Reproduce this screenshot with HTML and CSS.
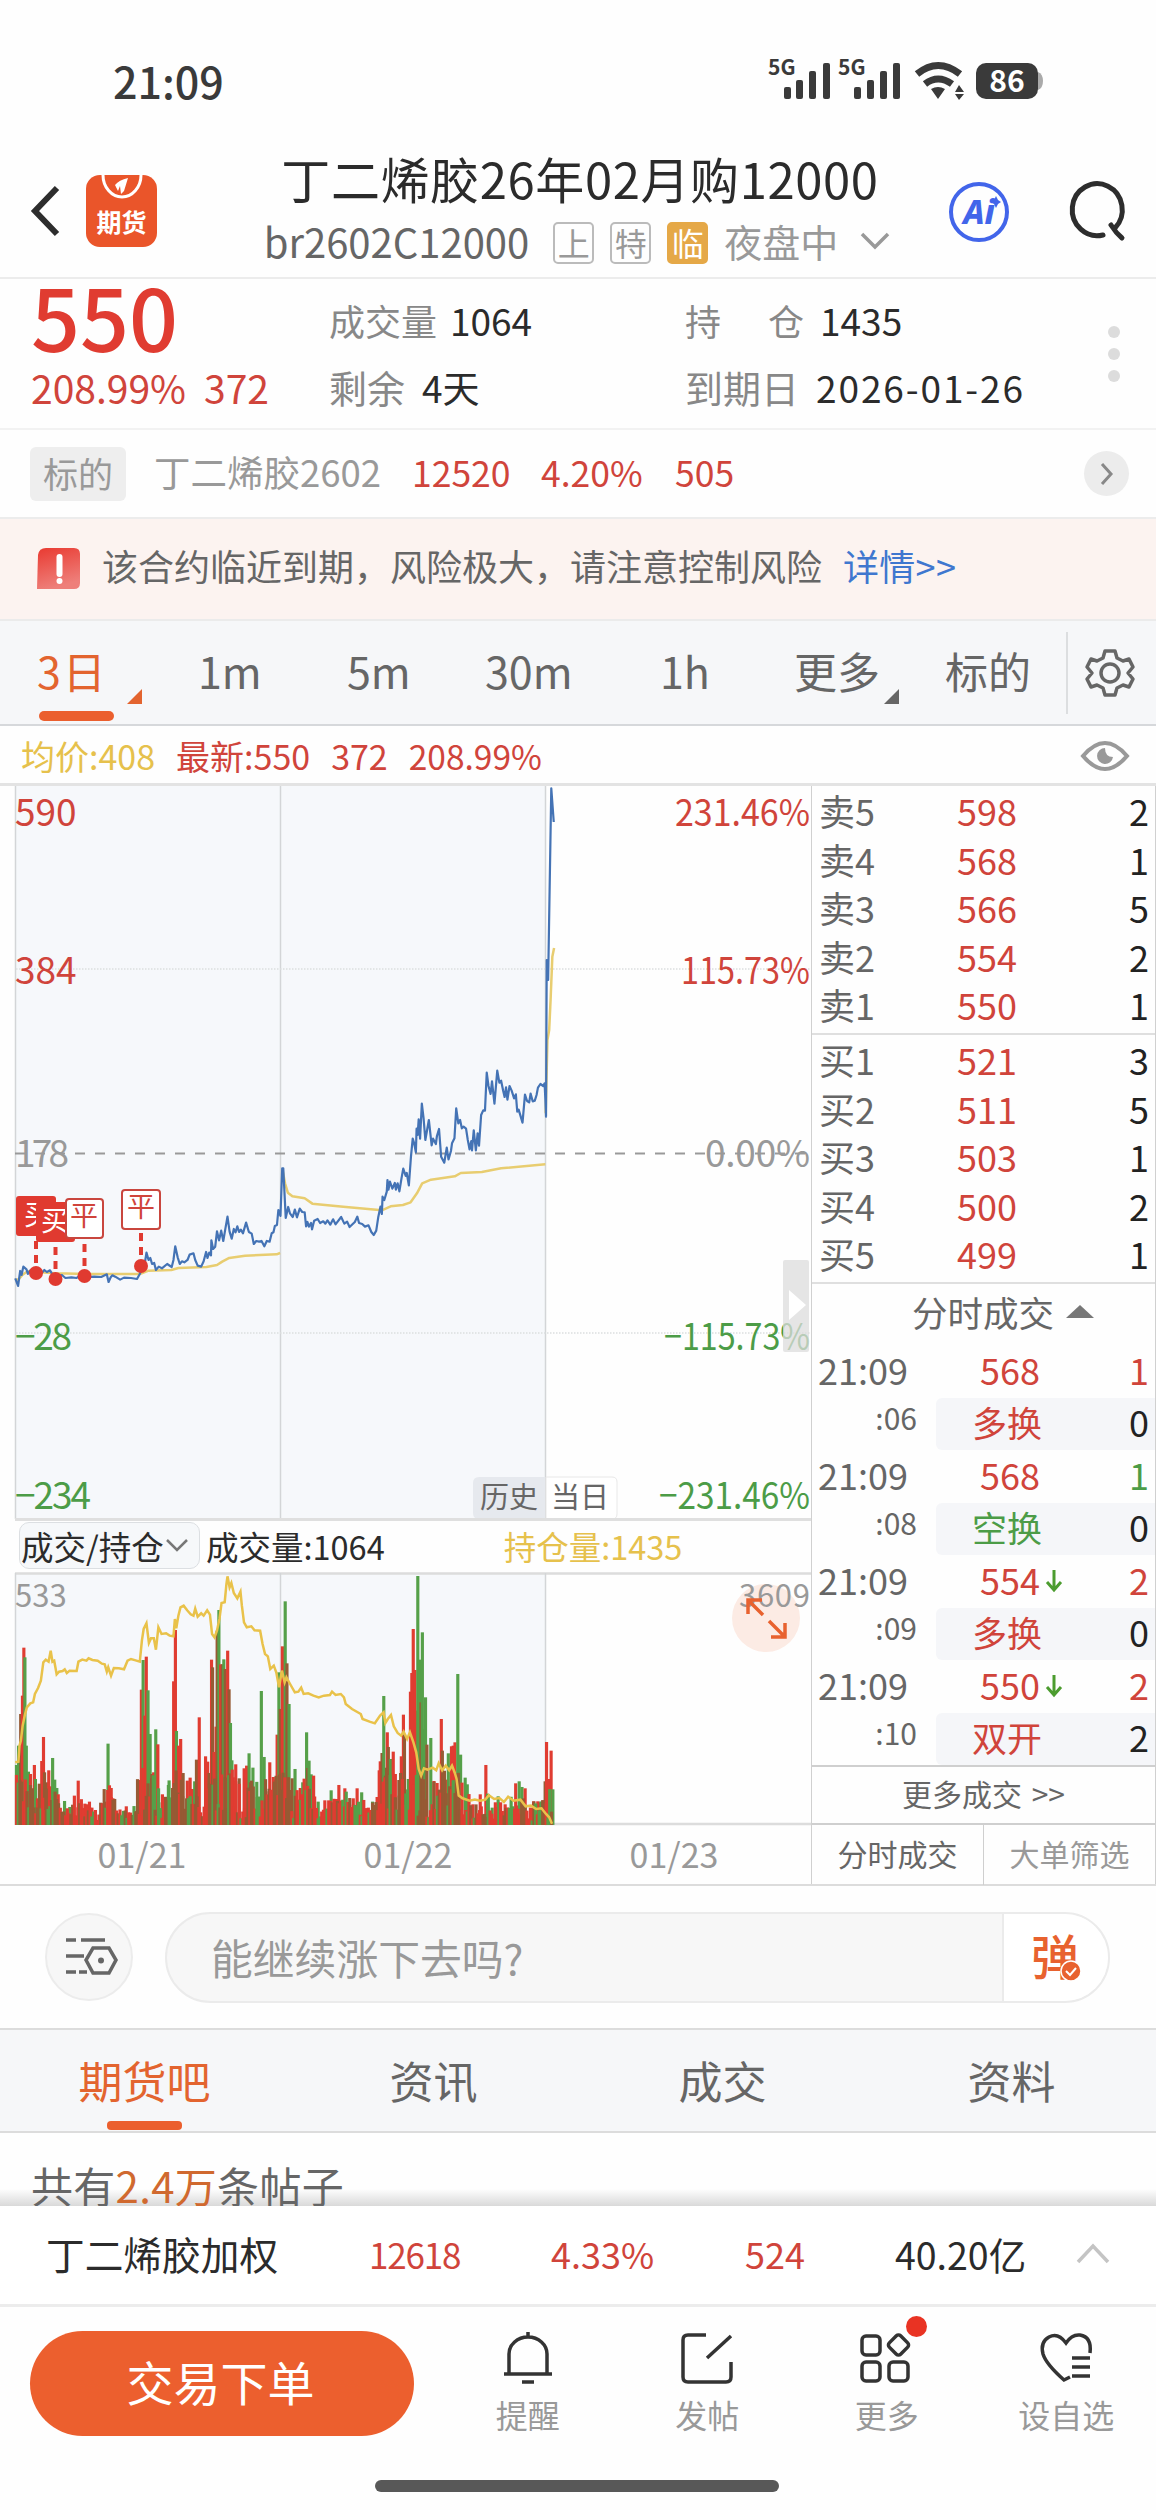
FILE: index.html
```
<!DOCTYPE html>
<html lang="zh-CN">
<head>
    <meta charset="UTF-8">
    <meta name="viewport" content="width=device-width, initial-scale=1.0">
    <title>丁二烯胶26年02月购12000</title>
    <link rel="stylesheet" href="styles.css">
</head>
<body>
    <!-- 状态栏 -->
    <div class="status">
        <span class="clock">21:09</span>
        <svg width="276" height="64" viewBox="766 48 276 64">
            <g fill="#3a3a3a">
                <text x="768" y="75" class="net">5G</text>
                <rect x="784" y="87" width="7" height="12" rx="2"/><rect x="796" y="80" width="7" height="19" rx="2"/><rect x="809" y="71" width="7" height="28" rx="2"/><rect x="823" y="63" width="7" height="36" rx="2"/>
                <text x="838" y="75" class="net">5G</text>
                <rect x="854" y="87" width="7" height="12" rx="2"/><rect x="867" y="80" width="7" height="19" rx="2"/><rect x="880" y="71" width="7" height="28" rx="2"/><rect x="893" y="63" width="7" height="36" rx="2"/>
                <path d="M931 89q7-4 14 0l-7 10zM955 92l4-7 5 7zM955 94h9l-5 6z"/>
                <rect x="976" y="63" width="62" height="36" rx="10"/>
            </g>
            <path d="M917 74q21-17 43 0M925 84q13-10 27 0" fill="none" stroke="#3a3a3a" stroke-width="7"/>
            <path d="M1038 72q5 2 5 9t-5 9z" fill="#aaa"/>
            <text x="1007" y="92" class="battery">86</text>
        </svg>
    </div>

    <!-- 顶部标题 -->
    <header class="header">
        <div class="header-left">
            <svg width="32" height="54" viewBox="0 0 32 54"><path d="M28 4L6 27l22 23" fill="none" stroke="#2d2d2d" stroke-width="6"/></svg>
            <div class="app-icon">
                <svg width="44" height="26" viewBox="0 0 44 26"><path d="M3 0a19 22 0 0 0 38 0" fill="none" stroke="#fff" stroke-width="3"/><path d="M15 10q4-5 13-7l-4 13-3 3-1-8-2 5z" fill="#fff"/></svg>
                <span>期货</span>
            </div>
        </div>
        <div class="header-mid">
            <div class="title">丁二烯胶26年02月购12000</div>
            <div class="sub">
                <span class="code">br2602C12000</span>
                <span class="tag">上</span><span class="tag">特</span><span class="tag warn">临</span>
                <span class="session">夜盘中</span>
                <svg width="30" height="18" viewBox="0 0 30 18"><path d="M2 2l13 13L28 2" fill="none" stroke="#999" stroke-width="3.5"/></svg>
            </div>
        </div>
        <div class="header-right">
            <div class="ai">Ai<svg width="10" height="12" viewBox="0 0 10 12"><path d="M5 0l2 4 3 2-3 2-2 4-2-4-3-2 3-2z" fill="#4265ea"/></svg></div>
            <svg width="60" height="60" viewBox="0 0 60 60"><path d="M36 53A25 26 0 1 1 48 46M44 43q5 8 11 13" fill="none" stroke="#2d2d2d" stroke-width="5" stroke-linecap="round"/></svg>
        </div>
    </header>

    <!-- 行情 -->
    <section class="quote">
        <div class="quote-price">
            <div class="price">550</div>
            <div class="change">208.99%<span>372</span></div>
        </div>
        <div class="quote-col">
            <div class="r1"><label>成交量</label>1064</div>
            <div class="r2"><label class="wide">剩余</label>4天</div>
        </div>
        <div class="quote-col">
            <div class="r1"><label class="split">持<i>仓</i></label>1435</div>
            <div class="r2"><label class="wide">到期日</label><span class="expiry">2026-01-26</span></div>
        </div>
        <div class="dots"><i></i><i></i><i></i></div>
    </section>

    <section class="underlying">
        <span class="ul-tag">标的</span>
        <span class="ul-name">丁二烯胶2602</span>
        <span class="red n1">12520</span><span class="red n2">4.20%</span><span class="red n3">505</span>
        <span class="go"><svg width="14" height="24" viewBox="0 0 14 24"><path d="M2 2l9 10-9 10" fill="none" stroke="#888" stroke-width="3"/></svg></span>
    </section>

    <section class="notice">
        <svg width="46" height="44" viewBox="0 0 46 44">
            <defs><linearGradient id="ng" x1="0" y1="0" x2="0.3" y2="1"><stop offset="0" stop-color="#e93a31"/><stop offset="1" stop-color="#ee7f7a"/></linearGradient></defs>
            <path d="M10 1h28q6 0 6 6v29q0 6-6 6H1l1-34q1-7 8-7z" fill="url(#ng)"/>
            <path d="M23.500 10v17" stroke="#fff" stroke-width="6" stroke-linecap="round"/><circle cx="23.500" cy="34" r="3" fill="#fff"/>
        </svg>
        <span>该合约临近到期，风险极大，请注意控制风险</span>
        <a>详情&gt;&gt;</a>
    </section>

    <!-- 周期切换 -->
    <nav class="periods">
        <span class="active has-more">3日</span>
        <span>1m</span><span>5m</span><span>30m</span><span>1h</span>
        <span class="has-more">更多</span><span>标的</span>
        <div class="gear">
            <svg width="48" height="50" viewBox="0 0 48 50" fill="none" stroke="#666" stroke-width="3.500" stroke-linejoin="round">
                <path d="M19 3h10l2 7 6 3 6-2 4 8-5 6 5 6-4 8-6-2-6 3-2 7H19l-2-7-6-3-6 2-4-8 5-6-5-6 4-8 6 2 6-3z"/><circle cx="24" cy="25" r="9"/>
            </svg>
        </div>
    </nav>

    <div class="info">
        <span class="yellow">均价:408</span><span class="red">最新:550</span><span class="red">372</span><span class="red pct">208.99%</span>
        <svg width="50" height="32" viewBox="0 0 50 32"><path d="M3 16Q14 3 25 3t22 13Q36 29 25 29T3 16z" fill="none" stroke="#999" stroke-width="4"/><path d="M25 8a8 8 0 1 0 8 9q-8 0-8-9z" fill="#999"/></svg>
    </div>

    <main class="board">
        <div class="charts">
            <svg class="price-chart" width="811" height="735" viewBox="0 785 811 735">
                <rect x="15" y="785" width="530" height="733" fill="#f6f8fb"/>
                <path d="M15.500 785v733M280.500 785v733M545.500 785v733" stroke="#d3d5d7" stroke-width="1.500"/>
                <path d="M16 968H811M16 1332H811" stroke="#dcdee0" stroke-width="1.500" stroke-dasharray="1.500 1.500"/>
                <g class="axis">
                    <text x="15" y="825" fill="#d0443b">590</text>
                    <text x="15" y="983" fill="#d0443b">384</text>
                    <text x="15" y="1166" fill="#999" textLength="54">178</text>
                    <text x="15" y="1349" fill="#4c9c47" textLength="57">−28</text>
                    <text x="15" y="1508" fill="#4c9c47" textLength="76">−234</text>
                    <text x="675" y="825" fill="#d0443b" textLength="135" lengthAdjust="spacingAndGlyphs">231.46%</text>
                    <text x="681" y="983" fill="#d0443b" textLength="129" lengthAdjust="spacingAndGlyphs">115.73%</text>
                    <text x="705" y="1166" fill="#999" textLength="105">0.00%</text>
                    <text x="664" y="1349" fill="#4c9c47" textLength="146" lengthAdjust="spacingAndGlyphs">−115.73%</text>
                    <text x="659" y="1508" fill="#4c9c47" textLength="151" lengthAdjust="spacingAndGlyphs">−231.46%</text>
                </g>
                <path d="M15 1152.500H811" stroke="#999" stroke-width="2" stroke-dasharray="10 10"/>
                <g transform="translate(10 1059) scale(.3508 .3333)" fill="none" stroke-linejoin="round">
                    <polyline class="avg" points="15,660 25,658 35,645 50,634 75,636 130,640 220,642 370,642 395,632 460,630 480,624 560,621 590,615 605,605 625,594 670,587 760,583 770,579"/>
                    <polyline class="avg" points="777,330 784,370 792,398 805,409 840,415 862,431 950,440 1060,451 1085,439 1120,435 1142,427 1160,400 1175,370 1200,359 1268,349 1285,339 1345,336 1400,325 1526,313"/>
                    <polyline class="avg" points="1527,160 1532,-60 1537,-90 1541,-180 1546,-310 1551,-336"/>
                    <polyline class="cur" points="15,655 23,678 29,633 33,645 38,620 47,628 51,642 57,632 64,645 75,640 88,642 98,630 105,636 114,631 122,645 135,648 148,645 158,654 175,652 190,654 205,640 215,652 240,650 260,651 276,643 281,666 287,652 292,646 300,650 314,659 325,653 345,654 362,657 370,642 377,625 384,612 389,578 395,600 400,594 405,612 411,609 416,630 424,620 433,625 448,612 461,621 466,600 471,559 478,592 484,612 490,604 497,607 506,600 512,584 523,580 528,600 535,617 545,620 552,604 559,576 563,594 568,578 573,586 574,541 579,567 585,560 590,514 596,541 602,512 608,543 613,512 620,470 626,515 632,536 638,507 643,517 648,499 653,516 658,509 664,520 673,488 681,516 689,521 695,552 702,543 710,545 717,543 725,559 732,543 740,545 746,520 751,517 755,498 761,495 765,450 771,468 776,325 779,325 786,474 793,441 798,460 806,471 812,449 818,472 826,446 833,456 840,457 844,499 848,486 852,500 858,489 861,508 867,482 877,477 884,489 893,484 899,491 905,481 913,494 921,478 928,493 944,471 953,491 961,485 968,501 983,486 990,470 995,489 1004,492 1012,500 1022,496 1030,516 1037,525 1044,512 1050,470 1056,440 1060,462 1062,410 1067,420 1074,395 1076,360 1079,389 1083,365 1090,386 1097,369 1100,389 1105,370 1110,394 1116,355 1121,326 1128,348 1131,339 1137,376 1143,290 1148,236 1152,249 1157,277 1159,206 1162,225 1165,178 1169,236 1174,131 1179,175 1184,240 1189,210 1194,180 1202,256 1206,236 1214,252 1217,228 1223,207 1229,290 1238,308 1245,263 1250,298 1257,273 1260,250 1267,235 1272,145 1278,190 1283,180 1288,205 1293,200 1300,206 1305,240 1310,268 1315,243 1317,271 1322,211 1328,271 1333,220 1337,257 1343,165 1349,151 1354,152 1359,38 1364,78 1370,102 1374,64 1381,131 1389,32 1395,68 1400,62 1406,93 1410,111 1414,82 1418,119 1424,78 1430,92 1437,115 1442,103 1446,155 1450,149 1461,188 1468,104 1474,123 1480,127 1484,101 1490,124 1496,122 1501,105 1505,83 1512,72 1520,78 1524,70 1526,115 1528,170 1530,-300 1534,-240 1543,-815 1550,-714"/>
                </g>
                <!-- 买卖点 -->
                <g stroke="#e03a30" stroke-width="4" stroke-dasharray="8 6">
                    <path d="M36 1240v29M55.500 1246v29M84.500 1243v28M141 1232v29"/>
                </g>
                <g fill="#e03a30"><circle cx="36" cy="1272" r="7"/><circle cx="55.500" cy="1278" r="7"/><circle cx="84.500" cy="1275" r="7"/><circle cx="141" cy="1265" r="7"/></g>
                <g class="pin">
                    <rect x="16" y="1195" width="40" height="40" rx="3" fill="#e03a30"/><text x="38" y="1224" fill="#fff">买</text>
                    <rect x="36" y="1201" width="39" height="40" rx="3" fill="#e03a30"/><text x="55" y="1230" fill="#fff">买</text>
                    <rect x="66" y="1198" width="37" height="39" rx="3" fill="#fff" stroke="#c9463e" stroke-width="2"/><text x="84" y="1225" fill="#d0443b">平</text>
                    <rect x="122" y="1189" width="38" height="39" rx="3" fill="#fff" stroke="#c9463e" stroke-width="2"/><text x="141" y="1216" fill="#d0443b">平</text>
                </g>
                <rect x="783" y="1259" width="26" height="92" rx="2" fill="#dcdcdc" fill-opacity=".75"/>
                <path d="M789 1289l17 15-17 15z" fill="#fff"/>
                <path d="M545 1476H479q-6 0-6 6v30q0 6 6 6h66z" fill="#e6e9ee"/>
                <path d="M546 1476h66q5 0 5 5v32q0 5-5 5h-66z" fill="#fff" stroke="#e8e8e8"/>
                <g class="seg"><text x="509" y="1507">历史</text><text x="580" y="1507">当日</text></g>
                <path d="M15 1518.500H811" stroke="#dfdfdf" stroke-width="3"/>
            </svg>

            <div class="legend">
                <span class="select">成交/持仓<svg width="24" height="14" viewBox="0 0 24 14"><path d="M2 2l10 10L22 2" fill="none" stroke="#777" stroke-width="2.500"/></svg></span>
                <span>成交量:1064</span>
                <span class="yellow oi">持仓量:1435</span>
            </div>

            <svg class="vol-chart" width="811" height="254" viewBox="0 1571 811 254">
                <rect x="15" y="1572" width="530" height="252" fill="#f6f8fb"/>
                <path d="M15 1572.500H811M545 1823H811" stroke="#dcdcdc" stroke-width="2.500"/>
                <path d="M15.500 1572v252M280.500 1572v252M545.500 1572v252" stroke="#d3d5d7" stroke-width="1.500"/>
                <text x="15" y="1606" class="vlab">533</text>
                <g transform="translate(10 1568) scale(.3508 .3333)">
                    <g id="bars"></g>
                    <polyline class="oi-line" points="15,580 24,578 27,530 31,515 36,470 42,440 48,415 58,403 66,400 71,375 80,357 88,335 95,280 102,272 110,278 116,245 121,278 126,275 133,316 140,308 150,306 156,301 162,312 170,305 190,306 195,278 206,272 218,275 224,268 235,273 250,275 262,284 270,286 276,308 280,295 288,320 296,297 310,298 325,301 335,275 345,270 358,274 370,278 376,215 381,180 389,163 396,222 402,208 410,208 416,242 423,175 432,195 445,193 455,200 466,202 470,150 474,178 480,140 486,115 495,110 505,124 515,136 523,140 528,119 535,143 545,133 552,140 562,124 570,137 576,195 583,205 590,185 597,150 603,102 612,100 617,45 620,22 626,55 631,42 638,72 648,88 657,68 661,110 667,160 675,175 688,172 697,184 713,185 720,225 727,255 735,262 742,300 752,290 759,310 767,355 775,305 783,340 788,325 800,348 812,370 822,368 830,356 837,375 850,373 865,380 880,385 895,380 912,378 918,368 928,378 943,375 952,385 957,405 975,420 1000,435 1005,450 1025,458 1040,463 1055,440 1065,430 1070,462 1077,450 1086,438 1094,472 1105,492 1115,500 1122,488 1132,510 1140,490 1150,520 1158,550 1165,600 1172,620 1180,598 1190,602 1205,596 1215,604 1222,583 1232,604 1242,590 1252,604 1260,590 1268,612 1273,630 1279,680 1290,688 1310,695 1325,692 1340,695 1355,692 1365,679 1380,690 1395,687 1408,699 1420,683 1435,695 1455,692 1470,712 1485,710 1500,720 1515,718 1528,735 1537,745 1545,764"/>
                </g>
                <circle cx="766" cy="1617" r="34" fill="#fcebe4"/>
                <text x="739" y="1606" class="vlab" textLength="71">3609</text>
                <path d="M763 1614l-15-15m0 14v-14h14M769 1620l16 16m0-14v14h-14" fill="none" stroke="#e8622f" stroke-width="3.500"/>
            </svg>
            <div class="dates"><span>01/21</span><span>01/22</span><span>01/23</span></div>
        </div>

        <!-- 五档与成交明细 -->
        <aside class="book">
            <div class="levels sell">
                <div><span>卖5</span><b>598</b><em>2</em></div>
                <div><span>卖4</span><b>568</b><em>1</em></div>
                <div><span>卖3</span><b>566</b><em>5</em></div>
                <div><span>卖2</span><b>554</b><em>2</em></div>
                <div><span>卖1</span><b>550</b><em>1</em></div>
            </div>
            <div class="levels buy">
                <div><span>买1</span><b>521</b><em>3</em></div>
                <div><span>买2</span><b>511</b><em>5</em></div>
                <div><span>买3</span><b>503</b><em>1</em></div>
                <div><span>买4</span><b>500</b><em>2</em></div>
                <div><span>买5</span><b>499</b><em>1</em></div>
            </div>
            <div class="ticks-head">分时成交<i></i></div>
            <div class="ticks" id="ticks"></div>
            <div class="more">更多成交 &gt;&gt;</div>
            <div class="book-tabs"><span class="on">分时成交</span><span>大单筛选</span></div>
        </aside>
    </main>

    <!-- 评论输入 -->
    <div class="comment">
        <span class="round">
            <svg width="52" height="42" viewBox="0 0 52 42" fill="none" stroke="#666" stroke-width="3.500"><path d="M1 4h10M16 4h24M1 20h18M1 36h10M14 36h8M28 12h16l7 12-7 13H28l-7-13z"/><circle cx="36" cy="24.500" r="3" fill="#666" stroke="none"/></svg>
        </span>
        <div class="input">
            <span>能继续涨下去吗?</span>
            <div class="danmu">弹<svg width="22" height="22" viewBox="0 0 22 22"><circle cx="11" cy="11" r="10" fill="#e8622f" stroke="#fff" stroke-width="1.500"/><path d="M6 11l4 4 6-7" fill="none" stroke="#fff" stroke-width="2"/></svg></div>
        </div>
    </div>

    <nav class="tabs"><span class="active">期货吧</span><span>资讯</span><span>成交</span><span>资料</span></nav>
    <div class="posts">共有<b>2.4万</b>条帖子</div>

    <div class="index-bar">
        <span class="name">丁二烯胶加权</span>
        <span class="red num">12618</span><span class="red">4.33%</span><span class="red">524</span><span class="amount">40.20亿</span>
        <svg width="34" height="22" viewBox="0 0 34 22"><path d="M2 20L17 4l15 16" fill="none" stroke="#c4c4c4" stroke-width="3.500"/></svg>
    </div>

    <footer class="footer">
        <button class="trade">交易下单</button>
        <div class="action">
            <svg width="54" height="54" viewBox="0 0 54 54" fill="none" stroke="#333" stroke-width="3.500"><path d="M3 43h48M8 43V23a19 17 0 0 1 38 0v20M27 1v6M21 51h12"/></svg>
            <span>提醒</span>
        </div>
        <div class="action">
            <svg width="54" height="54" viewBox="0 0 54 54" fill="none" stroke="#333" stroke-width="3.500"><path d="M26 4H8q-5 0-5 5v37q0 5 5 5h38q5 0 5-5V31M51 5L27 27"/></svg>
            <span>发帖</span>
        </div>
        <div class="action">
            <svg width="54" height="54" viewBox="2 0 54 54" fill="none" stroke="#333" stroke-width="3.500"><rect x="4" y="5" width="18" height="19" rx="4"/><rect x="4" y="31" width="18" height="19" rx="4"/><rect x="31" y="31" width="19" height="19" rx="4"/><rect x="32.500" y="6" width="16" height="16" rx="3" transform="rotate(45 40.500 14)"/></svg>
            <i class="dot"></i>
            <span>更多</span>
        </div>
        <div class="action">
            <svg width="54" height="54" viewBox="0 0 54 54" fill="none" stroke="#333" stroke-width="3.500"><path d="M51 22Q53 6 41 4q-8-1-14 8Q19 1 10 6 1 11 4 23q3 10 21 26l6-3M33 27h18M33 36h18M33 45h18"/></svg>
            <span>设自选</span>
        </div>
    </footer>
    <div class="home"></div>

    <script>
        const R = '#e03c31', G = '#55a049', M = '#965a34';

        // x, 顶部 y, 颜色
        const peaks = '18 588 g,24 530 g,30 435 m,35 380 r,39 236 r,42 265 g,46 530 g,52 608 g,58 615 r,69 588 r,72 630 g,78 688 r,90 576 r,95 504 r,98 610 m,104 640 m,110 604 r,115 652 r,121 567 g,127 632 g,133 657 g,137 676 r,155 696 g,170 714 g,194 635 r,197 722 g,213 704 r,226 698 r,233 716 r,279 524 g,270 698 r,288 657 r,293 688 r,312 735 g,331 712 r,355 726 r,370 633 r,374 362 r,379 273 g,384 440 r,388 263 r,393 364 g,399 495 g,404 615 m,409 610 r,415 481 g,421 526 r,424 700 g,434 676 r,442 705 r,451 648 g,466 337 r,471 183 r,474 486 g,480 530 r,486 510 r,492 682 g,505 635 r,513 626 r,520 660 r,526 637 g,531 572 m,539 445 r,557 562 r,563 578 r,567 612 m,574 272 r,577 295 m,581 549 r,587 473 r,590 185 m,595 123 g,600 286 r,605 286 m,609 271 g,613 300 m,620 245 r,624 361 m,628 462 g,632 574 g,636 625 r,643 586 r,653 628 m,667 598 r,674 590 r,681 553 g,685 640 m,692 596 g,704 684 r,716 366 g,724 564 g,729 667 r,740 580 r,750 624 r,756 632 r,761 497 r,766 310 g,770 420 m,776 232 r,784 97 g,789 283 m,795 405 g,804 628 m,812 600 g,821 692 g,827 657 r,834 640 g,845 490 g,848 597 m,852 575 g,858 616 g,865 620 r,878 698 g,897 694 r,915 664 g,930 690 r,937 648 r,954 658 r,958 668 g,978 688 r,989 658 r,1002 670 g,1021 716 r,1033 698 g,1046 684 r,1052 604 r,1055 577 r,1060 552 m,1065 381 g,1070 620 m,1075 490 r,1078 534 m,1084 570 g,1092 548 r,1098 615 r,1109 680 r,1115 562 r,1121 437 r,1124 495 m,1135 630 g,1141 368 r,1145 312 r,1149 180 r,1154 303 r,1158 425 r,1162 21 g,1167 272 g,1171 400 m,1175 190 g,1179 480 g,1184 385 g,1188 527 m,1199 507 g,1208 636 r,1217 642 r,1229 450 r,1232 545 m,1243 632 r,1249 553 g,1258 532 r,1263 530 r,1268 520 r,1276 315 g,1284 557 g,1297 626 g,1303 646 g,1319 706 r,1340 676 r,1356 588 r,1361 674 g,1374 716 g,1391 682 g,1411 706 r,1441 643 r,1451 637 g,1459 654 g,1468 658 r,1492 697 r,1504 697 r,1511 700 r,1525 637 m,1529 519 r,1537 630 r,1542 545 r,1547 661 g';
        const colors = { r: R, g: G, m: M };
        const list = peaks.split(',').map(s => s.split(' '));
        let html = '';
        function bar(x, y, c) {
            html += `<rect x="${x - 4}" y="${y}" width="9" height="${768 - y}" fill="${c}"/>`;
        }
        list.forEach(p => bar(+p[0], +p[1], colors[p[2]]));

        // 其余的小成交量柱
        let seed = 7;
        function rand() {
            seed = (seed * 16807) % 2147483647;
            return seed / 2147483647;
        }
        for (let x = 18; x < 1548; x += 5) {
            let near = 0;
            list.forEach(p => {
                if (Math.abs(p[0] - x) < 14) near = Math.max(near, 768 - p[1]);
            });
            const h = 12 + rand() * 28 + Math.min(near, 300) * rand() * 0.5;
            const k = rand();
            bar(x, 768 - h, near > 120 ? (k < .4 ? R : k < .6 ? G : M) : (k < .5 ? R : k < .75 ? G : M));
        }
        document.getElementById('bars').innerHTML = html;

        const ticks = [
            { s: '06', p: 568, v: 1, c: 'red', t: '多换', tc: 'red', d: 0 },
            { s: '08', p: 568, v: 1, c: 'green', t: '空换', tc: 'green', d: 0 },
            { s: '09', p: 554, v: 2, c: 'red', t: '多换', tc: 'red', d: 0, down: 1 },
            { s: '10', p: 550, v: 2, c: 'red', t: '双开', tc: 'red', d: 2, down: 1 }
        ];
        const arrow = '<svg width="18" height="24" viewBox="0 0 18 24"><path d="M9 1v20M2 13l7 8 7-8" fill="none" stroke="#4c9c2f" stroke-width="3"/></svg>';
        document.getElementById('ticks').innerHTML = ticks.map(t => `
            <div class="tick">
                <span>21:09</span><b class="red">${t.p}</b><i>${t.down ? arrow : ''}</i><em class="${t.c}">${t.v}</em>
                <small>:${t.s}</small><div class="kind"><b class="${t.tc}">${t.t}</b><em>${t.d}</em></div>
            </div>`).join('');
    </script>
</body>
</html>
```
FILE: styles.css
```
* {
    box-sizing: border-box;
}
body {
    margin: 0;
    width: 1156px;
    height: 2510px;
    overflow: hidden;
    background: #fefefe;
    color: #2b2b2b;
    font-family: "Noto Sans CJK SC", sans-serif;
    font-size: 36px;
}
svg {
    display: block;
    flex: none;
    overflow: visible;
}
span, b, em, i, small {
    white-space: nowrap;
    font-style: normal;
    font-weight: normal;
}
.red {
    color: #d0443b;
}
.green {
    color: #4c9c47;
}
.yellow {
    color: #e6c14c;
}

/* 状态栏 */
.status {
    height: 151px;
    padding: 9px 114px 0 113px;
    display: flex;
    align-items: center;
    justify-content: space-between;
}
.clock {
    font-size: 43px;
    font-weight: 500;
    color: #3a3a3a;
    line-height: 60px;
}
.net {
    font-size: 21px;
    font-weight: 700;
}
.battery {
    font-size: 30px;
    font-weight: 700;
    fill: #fff;
    text-anchor: middle;
}

/* 标题 */
.header {
    height: 128px;
    display: flex;
    border-bottom: 2px solid #ececec;
}
.header-left {
    width: 205px;
    height: 120px;
    padding-left: 29px;
    display: flex;
    align-items: center;
    gap: 25px;
}
.app-icon {
    width: 71px;
    height: 72px;
    border-radius: 14px;
    background: #ea552a;
    color: #fff;
    display: flex;
    flex-direction: column;
    align-items: center;
}
.app-icon span {
    font-size: 25px;
    font-weight: 700;
    line-height: 40px;
}
.header-mid {
    width: 750px;
    text-align: center;
}
.title {
    font-size: 49px;
    line-height: 54px;
    margin-bottom: 6px;
    letter-spacing: 0.6px;
}
.sub {
    display: flex;
    align-items: center;
    justify-content: center;
    height: 60px;
    padding-right: 6px;
    color: #999;
}
.code {
    font-size: 40px;
    line-height: 60px;
    color: #666;
    margin-right: 24px;
}
.tag {
    width: 41px;
    height: 42px;
    margin: 3px 16px 0 0;
    border: 2px solid #bbb;
    border-radius: 5px;
    font-size: 32px;
    line-height: 36px;
}
.tag.warn {
    background: #e5a847;
    border-color: #e5a847;
    color: #fff;
}
.session {
    font-size: 38px;
    line-height: 60px;
    margin-right: 22px;
}
.header-right {
    display: flex;
    align-items: center;
    height: 122px;
    gap: 58px;
}
.ai {
    position: relative;
    width: 60px;
    height: 60px;
    margin-left: -6px;
    border: 4px solid #4265ea;
    border-radius: 50%;
    color: #4265ea;
    font: italic 800 33px/52px "Noto Sans", sans-serif;
    text-align: center;
}
.ai svg {
    position: absolute;
    right: 4px;
    top: 10px;
}

/* 行情 */
.quote {
    height: 151px;
    padding-left: 31px;
    display: flex;
    border-bottom: 2px solid #f2f2f2;
}
.quote-price {
    width: 298px;
    color: #e03c31;
}
.price {
    font-size: 86px;
    font-weight: 500;
    line-height: 72px;
}
.change {
    font-size: 39px;
    line-height: 72px;
    color: #d0443b;
}
.change span {
    margin-left: 18px;
}
.quote-col {
    width: 356px;
    font-size: 37px;
}
.quote-col label {
    display: inline-block;
    color: #888;
    font-size: 36px;
    margin-right: 13px;
}
.quote-col label.wide {
    font-size: 38px;
    margin-right: 17px;
}
.quote-col label.split {
    margin-right: 16px;
}
.quote-col label.split i {
    margin-left: 47px;
}
.expiry {
    letter-spacing: 1.9px;
}
.r1 {
    line-height: 82px;
}
.r2 {
    line-height: 51px;
}
.dots {
    margin-left: 67px;
    padding-top: 47px;
}
.dots i {
    display: block;
    width: 12px;
    height: 12px;
    margin-bottom: 10px;
    border-radius: 50%;
    background: #dcdcdc;
}

.underlying {
    height: 89px;
    padding: 0 27px 0 30px;
    display: flex;
    align-items: center;
    border-bottom: 2px solid #ececec;
    line-height: 48px;
    font-size: 35.5px;
}
.ul-tag {
    width: 96px;
    height: 54px;
    border-radius: 6px;
    background: #eee;
    color: #999;
    font-size: 35px;
    line-height: 51px;
    text-align: center;
}
.ul-name {
    width: 258px;
    margin-left: 28px;
    color: #999;
    font-size: 36.5px;
}
.n1 {
    width: 129px;
}
.n2 {
    width: 134px;
}
.n1, .n2, .n3, .ul-name {
    padding-bottom: 4px;
}
.go {
    width: 45px;
    height: 45px;
    margin-left: auto;
    border-radius: 50%;
    background: #ececec;
    display: flex;
    align-items: center;
    justify-content: center;
}

.notice {
    height: 102px;
    padding: 0 0 9px 36px;
    display: flex;
    align-items: center;
    background: #fcf3f0;
    border-bottom: 2px solid #ebebeb;
    color: #666;
}
.notice svg {
    margin-top: 9px;
}
.notice span {
    margin-left: 20px;
    width: 741px;
    font-size: 36px;
}
.notice a {
    color: #3f77cf;
    letter-spacing: 0.3px;
}

/* 周期 */
.periods {
    height: 105px;
    padding-left: 37px;
    display: grid;
    grid-template-columns: 161px 149px 138px 175px 134px 151px 121px 90px;
    align-items: center;
    background: #f6f7f9;
    border-bottom: 2px solid #d6d8db;
    color: #666;
    font-size: 43px;
}
.periods span {
    position: relative;
    line-height: 98px;
    height: 103px;
}
.periods .active {
    color: #e3642f;
    letter-spacing: 2px;
}
.periods .active::before {
    content: "";
    position: absolute;
    left: 2px;
    bottom: 3px;
    width: 75px;
    height: 10px;
    border-radius: 5px;
    background: #eb5f2e;
}
.has-more::after {
    content: "";
    position: absolute;
    left: 90px;
    top: 68px;
    border-left: 15px solid transparent;
    border-bottom: 15px solid currentColor;
}
.gear {
    height: 82px;
    padding: 16px 0 0 18px;
    border-left: 2px solid #dcdee0;
}

.info {
    height: 60px;
    padding: 2px 26px 0 21px;
    display: flex;
    align-items: center;
    gap: 21px;
    font-size: 34px;
    border-bottom: 3px solid #e3e3e3;
}
.info .pct {
    font-size: 33.5px;
}
.info svg {
    margin-left: auto;
}

/* 图表 */
.board {
    display: flex;
    height: 1100px;
    border-bottom: 2px solid #dcdcdc;
}
.charts {
    width: 812px;
    border-right: 1px solid #d0d0d0;
}
.price-chart {
    overflow: hidden;
}
.axis {
    font-size: 37px;
}
.avg {
    stroke: #e8cd70;
    stroke-width: 2.5;
    vector-effect: non-scaling-stroke;
}
.cur {
    stroke: #4473b5;
    stroke-width: 2.2;
    vector-effect: non-scaling-stroke;
}
.pin {
    font-size: 28px;
    text-anchor: middle;
}
.seg {
    font-size: 29px;
    fill: #666;
    text-anchor: middle;
}
.legend {
    height: 51px;
    padding: 0 0 3px 19px;
    display: flex;
    align-items: center;
    font-size: 32.5px;
}
.select {
    width: 181px;
    height: 47px;
    margin-right: 6px;
    padding-left: 1px;
    display: flex;
    align-items: center;
    gap: 1px;
    background: #f6f8fa;
    border: 1px solid #dcdfe2;
    border-radius: 10px;
}
.oi {
    margin-left: 119px;
}
.vlab {
    font-size: 31px;
    fill: #999;
}
.oi-line {
    fill: none;
    stroke: #e9c24a;
    stroke-width: 2.5;
    vector-effect: non-scaling-stroke;
}
.dates {
    display: grid;
    grid-template-columns: repeat(3, 266px);
    padding-left: 9px;
    line-height: 55px;
    font-size: 34px;
    color: #999;
    text-align: center;
}

/* 五档 */
.book {
    width: 344px;
    border-right: 1px solid #d0d0d0;
}
.levels {
    height: 249px;
    padding-top: 1px;
    border-bottom: 2px solid #dfdfdf;
    font-size: 36px;
}
.levels div {
    height: 48.600px;
    line-height: 47px;
    padding: 0 6px 0 7px;
    display: grid;
    grid-template-columns: 100px 98px 1fr;
    color: #666;
}
.levels b {
    text-align: right;
    color: #d0443b;
}
.levels em {
    text-align: right;
    color: #222;
}
.ticks-head {
    height: 61px;
    padding: 0 0 7px 100px;
    display: flex;
    align-items: center;
    font-size: 35.5px;
    color: #666;
}
.ticks-head i {
    margin-left: 12px;
    border: 14px solid transparent;
    border-top: 0;
    border-bottom: 13px solid #777;
}
.tick {
    height: 104.900px;
    padding-left: 6px;
    display: grid;
    grid-template-columns: 118px 104px 30px 1fr;
    grid-template-rows: 53px 52px;
    line-height: 48px;
    color: #666;
}
.tick > b, .tick > em {
    text-align: right;
}
.tick i {
    padding: 14px 0 0 5px;
}
.tick > em, .kind em {
    padding-right: 6px;
}
.tick small {
    padding-right: 19px;
    text-align: right;
    font-size: 30px;
    line-height: 38px;
}
.kind {
    grid-column: 2 / 5;
    display: flex;
    justify-content: space-between;
    padding-left: 36px;
    background: #f5f6f9;
    border-radius: 6px 0 0 6px;
    line-height: 47px;
}
.kind b {
    font-size: 35px;
}
.kind em {
    color: #222;
}
.more {
    height: 60px;
    line-height: 53px;
    text-align: center;
    font-size: 30px;
    word-spacing: 3px;
    color: #666;
    border-top: 2px solid #cfcfcf;
    border-bottom: 2px solid #cfcfcf;
}
.book-tabs {
    display: flex;
    line-height: 56px;
    height: 60px;
    font-size: 30px;
    text-align: center;
    color: #999;
}
.book-tabs span {
    flex: 1;
}
.book-tabs .on {
    color: #666;
    border-right: 1px solid #cfcfcf;
}

/* 评论 */
.comment {
    height: 142px;
    padding: 0 46px 0 45px;
    display: flex;
    align-items: center;
    gap: 32px;
}
.round {
    width: 88px;
    height: 88px;
    padding-left: 4px;
    border: 2px solid #ececec;
    border-radius: 50%;
    background: #f7f7f7;
    display: flex;
    align-items: center;
    justify-content: center;
}
.input {
    flex: 1;
    height: 91px;
    padding-left: 44px;
    display: flex;
    align-items: center;
    justify-content: space-between;
    border: 2px solid #ebebeb;
    border-radius: 46px;
    background: #f7f7f7;
    color: #999;
    font-size: 41.8px;
}
.danmu {
    position: relative;
    width: 106px;
    height: 87px;
    padding-left: 27px;
    background: #fff;
    border-left: 2px solid #ebebeb;
    border-radius: 0 44px 44px 0;
    color: #e8622f;
    font-size: 48px;
    font-weight: 500;
    line-height: 80px;
}
.danmu svg {
    position: absolute;
    left: 56px;
    top: 46px;
}

.tabs {
    height: 105px;
    display: grid;
    grid-template-columns: repeat(4, 289px);
    background: #f6f7f9;
    border-top: 2px solid #dcdcdc;
    border-bottom: 2px solid #dcdcdc;
    color: #666;
    font-size: 44px;
    line-height: 100px;
    text-align: center;
}
.tabs .active {
    position: relative;
    color: #e3642f;
}
.tabs .active::after {
    content: "";
    position: absolute;
    left: 107px;
    bottom: 1px;
    width: 75px;
    height: 9px;
    border-radius: 4px;
    background: #eb5f2e;
}
.posts {
    height: 73px;
    padding: 18px 0 0 31px;
    font-size: 42px;
    line-height: 68px;
    letter-spacing: 0.3px;
    color: #666;
    overflow: hidden;
    background: linear-gradient(#fefefe 56px, #d9d9d9 73px);
}
.posts b {
    color: #d0692f;
}

/* 底部 */
.index-bar {
    height: 101px;
    padding: 0 45px 4px 46px;
    display: grid;
    grid-template-columns: 323px 182px 194px 150px 181px 34px;
    align-items: center;
    background: #fff;
    border-bottom: 3px solid #ececec;
    font-size: 36px;
}
.index-bar .name {
    font-size: 38.7px;
}
.index-bar .num {
    font-size: 35px;
    letter-spacing: -1.2px;
}
.index-bar .amount {
    font-size: 37.5px;
}
.footer {
    height: 160px;
    padding-left: 30px;
    display: flex;
}
.trade {
    width: 384px;
    height: 105px;
    margin: 24px 24px 0 0;
    border: 0;
    border-radius: 53px;
    background: #ec5f2e;
    color: #fff;
    font: 47px/98px "Noto Sans CJK SC", sans-serif;
    padding: 0 3px 5px 0;
}
.action {
    position: relative;
    width: 179.500px;
    padding-top: 24px;
    display: flex;
    flex-direction: column;
    align-items: center;
    font-size: 32px;
    line-height: 46px;
    color: #999;
}
.action span {
    margin-top: 6px;
}
.dot {
    position: absolute;
    left: 109px;
    top: 9px;
    width: 21px;
    height: 21px;
    border-radius: 50%;
    background: #e93323;
}
.home {
    width: 404px;
    height: 12px;
    margin: 13px 0 0 375px;
    border-radius: 6px;
    background: #585858;
}
```
